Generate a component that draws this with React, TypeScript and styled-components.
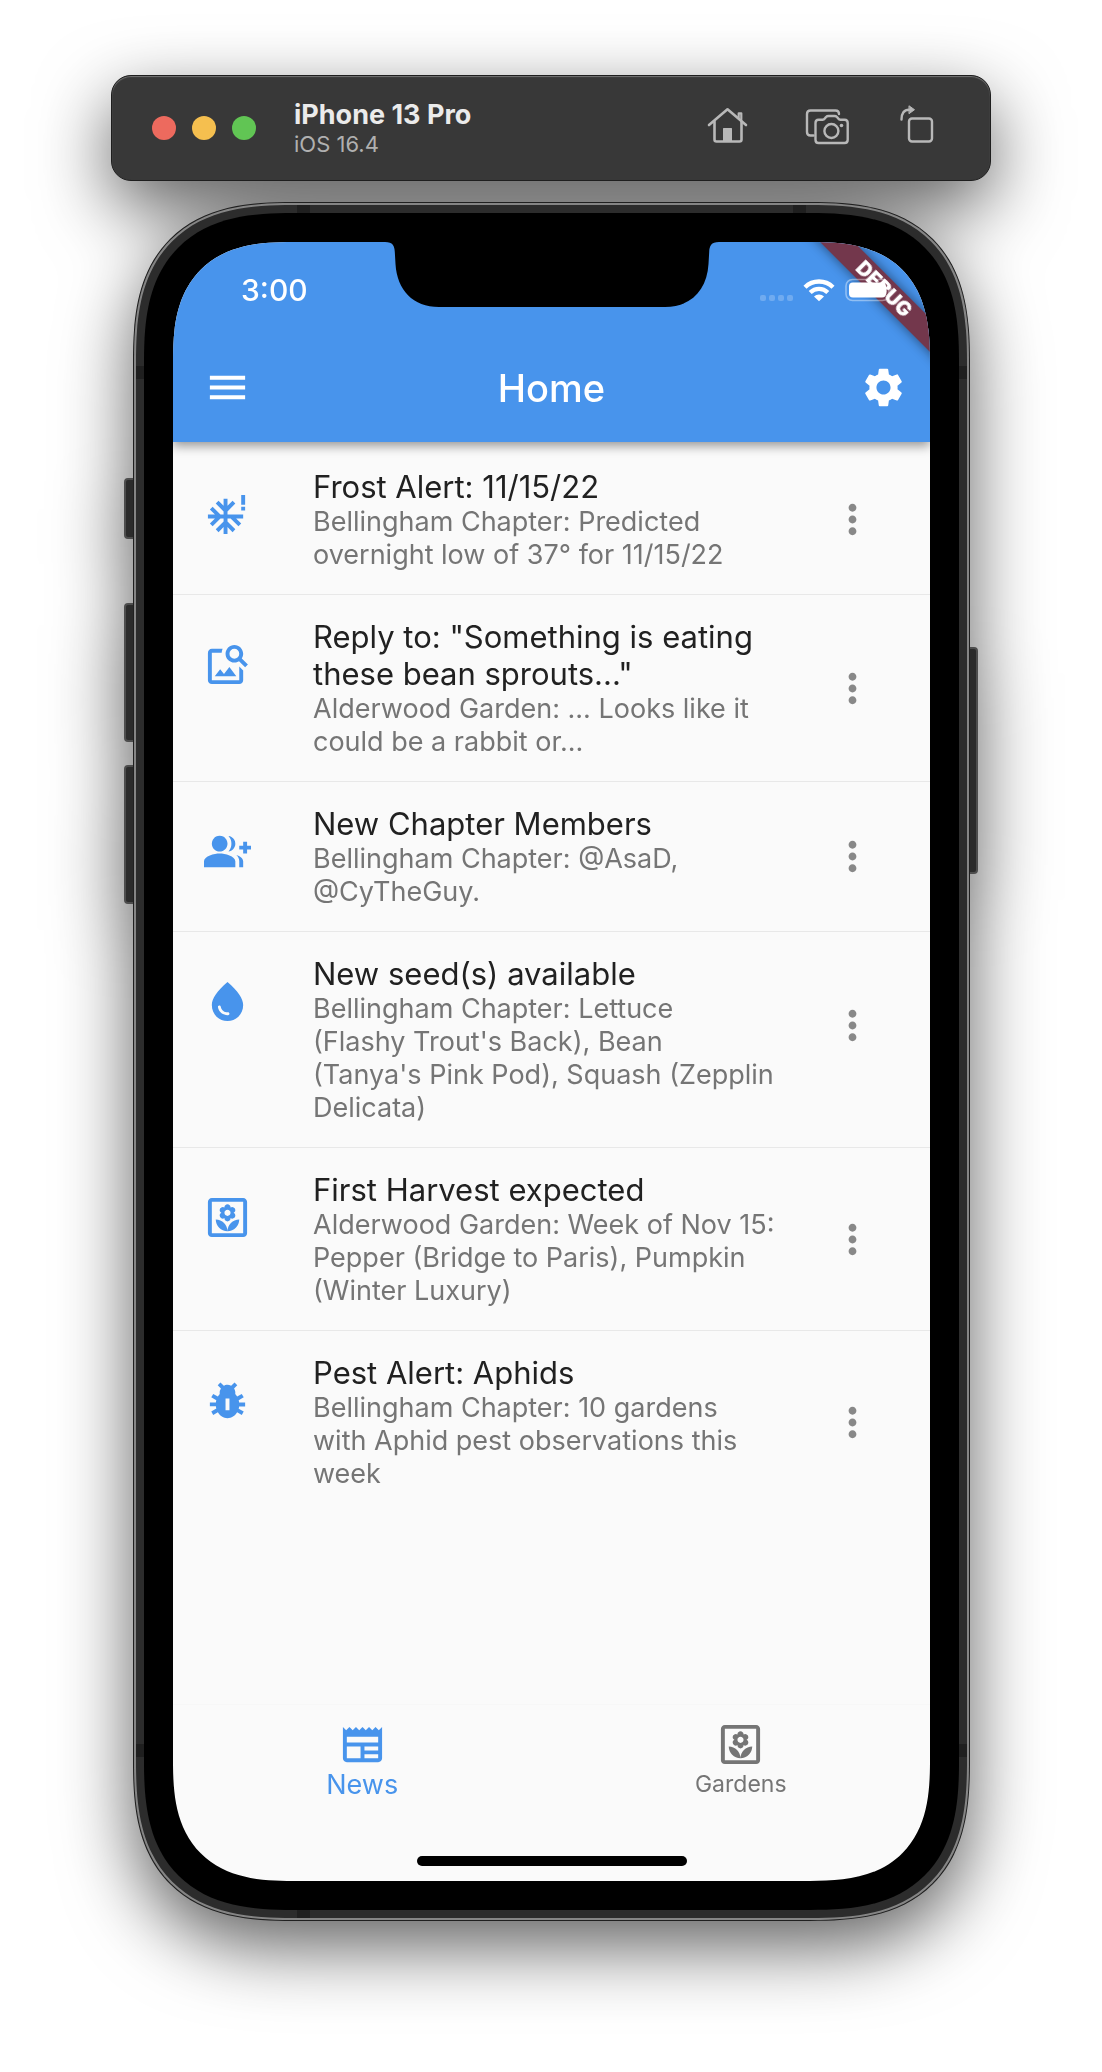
import React from "react";
import styled, { createGlobalStyle } from "styled-components";
import {
  MdGroupAdd,
  MdImageSearch,
  MdMenu,
  MdMoreVert,
  MdNewspaper,
  MdOutlineYard,
  MdPestControl,
  MdSettings,
  MdSevereCold,
  MdWaterDrop,
} from "react-icons/md";

const blue = "#4894ec";

const GlobalStyle = createGlobalStyle`
  *, *::before, *::after { box-sizing: border-box; }
  body {
    margin: 0;
    background: #fff;
    font-family: Inter, "Liberation Sans", sans-serif;
    -webkit-font-smoothing: antialiased;
  }
  h1, h2, p, ul { margin: 0; padding: 0; }
`;

const Page = styled.main`
  padding: 75px 24px 151px;
  overflow: hidden;
`;

const Simulator = styled.div`
  max-width: 880px;
  margin: 0 auto;
  display: flex;
  flex-direction: column;
  gap: 21px;
  filter: drop-shadow(0 26px 36px rgba(0, 0, 0, 0.62));
`;

/* Simulator window bar */

const WindowBar = styled.header`
  display: flex;
  align-items: center;
  height: 106px;
  padding: 0 54px 0 40px;
  border: 1px solid #1e1e1e;
  border-radius: 20px;
  background: #383838;
  box-shadow: inset 0 1px 1px #757575;
`;

const Lights = styled.div`
  display: flex;
  gap: 16px;
`;

const Light = styled.button<{ $color: string }>`
  width: 24px;
  height: 24px;
  padding: 0;
  border: 0;
  border-radius: 50%;
  background: ${(p) => p.$color};
`;

const DeviceInfo = styled.div`
  flex: 1;
  margin-left: 38px;
`;

const DeviceName = styled.p`
  color: #ebebeb;
  font-size: 27px;
  font-weight: 700;
  line-height: 32px;
`;

const DeviceOs = styled.p`
  color: #b0b0b0;
  font-size: 22px;
  line-height: 26px;
`;

const Tools = styled.div`
  display: flex;
  gap: 48px;
`;

const Tool = styled.button`
  display: block;
  padding: 0;
  border: 0;
  background: none;
  color: #b8b8b8;

  svg {
    display: block;
  }
`;

/* Phone hardware */

const Phone = styled.div`
  position: relative;
  margin: 0 21px 0 22px;
`;

const SideButton = styled.span<{ $side: "left" | "right"; $top: number; $length: number }>`
  position: absolute;
  top: ${(p) => p.$top}px;
  ${(p) => (p.$side === "left" ? "left: -9px;" : "right: -8px;")}
  width: 16px;
  height: ${(p) => p.$length}px;
  border: 2px solid #4d4d4d;
  border-radius: 4px;
  background: #2b2b2b;
`;

const Shell = styled.div`
  position: relative;
  padding: 2px;
  border: 1px solid #202020;
  border-radius: 128px;
  background: #858585;

  @supports (corner-shape: superellipse(1.4)) {
    border-radius: 160px;
    corner-shape: superellipse(1.4);
  }
`;

const Band = styled.div`
  padding: 8px;
  border-radius: 125px;
  background:
    linear-gradient(#1f1f1f, #1f1f1f) left 161px top / 13px 8px,
    linear-gradient(#1f1f1f, #1f1f1f) right 161px top / 13px 8px,
    linear-gradient(#1f1f1f, #1f1f1f) left 161px bottom / 13px 8px,
    linear-gradient(#1f1f1f, #1f1f1f) left top 161px / 8px 13px,
    linear-gradient(#1f1f1f, #1f1f1f) right top 161px / 8px 13px,
    linear-gradient(#1f1f1f, #1f1f1f) left bottom 161px / 8px 13px,
    linear-gradient(#1f1f1f, #1f1f1f) right bottom 161px / 8px 13px,
    #2c2c2c;
  background-repeat: no-repeat;

  @supports (corner-shape: superellipse(1.4)) {
    border-radius: 157px;
    corner-shape: superellipse(1.4);
  }
`;

const Bezel = styled.div`
  padding: 29px;
  border-radius: 117px;
  background: #000;

  @supports (corner-shape: superellipse(1.4)) {
    border-radius: 149px;
    corner-shape: superellipse(1.4);
  }
`;

const Screen = styled.div`
  position: relative;
  display: flex;
  flex-direction: column;
  min-height: 1639px;
  overflow: hidden;
  border-radius: 94px;
  background: #fafafa;

  @supports (corner-shape: superellipse(1.4)) {
    border-radius: 120px;
    corner-shape: superellipse(1.4);
  }
`;

const Notch = styled.svg`
  position: absolute;
  top: 0;
  left: 50%;
  width: 334px;
  height: 65px;
  transform: translateX(-50%);
`;

const Banner = styled.span`
  position: absolute;
  top: 35px;
  right: -54px;
  width: 200px;
  height: 24px;
  color: #fff;
  background: rgba(124, 34, 40, 0.82);
  box-shadow: 0 0 12px rgba(0, 0, 0, 0.5);
  font-size: 20px;
  font-weight: 900;
  line-height: 24px;
  text-align: center;
  transform: rotate(45deg);
`;

/* App */

const AppHeader = styled.header`
  position: relative;
  background: ${blue};
  color: #fff;
  box-shadow: 0 4px 10px rgba(0, 0, 0, 0.4);
`;

const StatusBar = styled.div`
  position: relative;
  display: flex;
  align-items: center;
  justify-content: space-between;
  height: 91px;
  padding: 5px 38px 0 68px;
`;

const Clock = styled.time`
  font-size: 30px;
  font-weight: 500;
  line-height: 36px;
`;

const StatusIcons = styled.div`
  display: flex;
  align-items: center;
  gap: 10px;

  svg {
    display: block;
  }
`;

const Toolbar = styled.div`
  display: grid;
  grid-template-columns: 1fr auto 1fr;
  align-items: center;
  height: 109px;
  padding: 0 23px;
`;

const ToolbarButton = styled.button<{ $end?: boolean }>`
  justify-self: ${(p) => (p.$end ? "end" : "start")};
  padding: ${(p) => (p.$end ? "0" : "0 8px")};
  border: 0;
  background: none;
  color: inherit;
  font-size: 47px;
  line-height: 0;
`;

const Title = styled.h1`
  font-size: 38px;
  font-weight: 500;
  line-height: 44px;
`;

const List = styled.ul`
  flex: 1;
  padding-top: 3px;
  list-style: none;
`;

const Item = styled.li`
  display: grid;
  grid-template-columns: 109px minmax(0, 1fr) 93px;
  padding: 23px 31px;
  border-bottom: 1px solid #e8e8e8;

  &:last-child {
    border-bottom: 0;
  }
`;

const ItemIcon = styled.span`
  padding-top: 23px;
  color: ${blue};
  font-size: 47px;
  line-height: 0;
`;

const ItemText = styled.div`
  padding-right: 16px;
  white-space: pre-line;
`;

const ItemTitle = styled.h2`
  color: #212121;
  font-size: 31px;
  font-weight: 400;
  line-height: 37px;
`;

const ItemBody = styled.p`
  color: #757575;
  font-size: 27px;
  line-height: 33px;
`;

/* Centred on the text, but never lower than the middle of a four-line item */
const MoreButton = styled.button`
  justify-self: center;
  align-self: start;
  height: 100%;
  max-height: 140px;
  padding: 0;
  border: 0;
  background: none;
  color: #888;
  font-size: 47px;
  line-height: 0;
`;

const BottomBar = styled.footer`
  display: flex;
  flex-direction: column;
  align-items: center;
  justify-content: space-between;
  height: 177px;
  padding: 16px 0 15px;
  border-top: 1px solid #f7f7f7;
`;

const Tabs = styled.nav`
  display: grid;
  grid-template-columns: 1fr 1fr;
  width: 100%;
`;

const Tab = styled.a<{ $active?: boolean }>`
  display: flex;
  flex-direction: column;
  align-items: center;
  color: ${(p) => (p.$active ? blue : "#757575")};
  font-size: ${(p) => (p.$active ? 27 : 23)}px;
  line-height: 33px;
  text-decoration: none;

  svg {
    font-size: 47px;
  }
`;

const HomeIndicator = styled.span`
  width: 270px;
  height: 10px;
  border-radius: 5px;
  background: #000;
`;

const HomeGlyph = () => (
  <svg width="48" height="48" viewBox="0 0 48 48" fill="none" stroke="currentColor" strokeWidth="2.6" strokeLinecap="round" strokeLinejoin="round">
    <path d="M5 21 23.5 5.3 42 21" />
    <path d="M10.5 17.5V35.5Q10.5 37.5 12.5 37.5H35.5Q37.5 37.5 37.5 35.5V17.5" />
    <path d="M34.7 13.5V9.3H37.3V15.5" strokeWidth="2.2" />
    <path d="M19 24.5Q19 24 19.5 24H27.5Q28 24 28 24.5V37.5H19Z" fill="currentColor" stroke="none" />
  </svg>
);

const CameraGlyph = () => (
  <svg width="52" height="48" viewBox="0 0 52 48" fill="none" stroke="currentColor" strokeWidth="2.4" strokeLinecap="round" strokeLinejoin="round">
    <path d="M13.5 31.5H10.5Q7 31.5 7 28V10Q7 6.5 10.5 6.5H35.5Q39 6.5 39 10" />
    <path d="M18.5 15.7H22.5Q24 15.7 25 14.3L26 13Q27 12 28.5 12H34.5Q36 12 37 13L38 14.3Q39 15.7 40.5 15.7H44.5Q47.7 15.7 47.7 19V35.7Q47.7 39 44.5 39H18.5Q15.5 39 15.5 35.7V19Q15.5 15.7 18.5 15.7Z" />
    <circle cx="31.4" cy="27" r="7" />
    <circle cx="41.5" cy="21.5" r="1.8" fill="currentColor" stroke="none" />
  </svg>
);

const RotateGlyph = () => (
  <svg width="36" height="48" viewBox="0 0 36 48" fill="none" stroke="currentColor" strokeWidth="2.4" strokeLinecap="round" strokeLinejoin="round">
    <rect x="9" y="14.5" width="23" height="23" rx="3" />
    <path d="M1.5 15.5C1.5 9 4 5.7 9 5.7" />
    <path d="M9.3 2 14.5 5.7 9.3 9.5Z" fill="currentColor" strokeWidth="1" />
  </svg>
);

const SignalGlyph = () => (
  <svg width="33" height="24" viewBox="0 0 33 24" fill="#fff" fillOpacity="0.22">
    {[0, 9, 18, 27].map((x) => (
      <rect key={x} x={x} y="17" width="6" height="6" rx="2" />
    ))}
  </svg>
);

const WifiGlyph = () => (
  <svg width="32" height="24" viewBox="0 0 32 24" fill="none" stroke="#fff">
    <path d="M2 9.2A20 20 0 0 1 30 9.2" strokeWidth="4.4" />
    <path d="M7.2 14.5A12.5 12.5 0 0 1 24.8 14.5" strokeWidth="4.2" />
    <path d="M16 23.3 11 18.5A7 7 0 0 1 21 18.5Z" fill="#fff" stroke="none" />
  </svg>
);

const BatteryGlyph = () => (
  <svg width="47" height="24" viewBox="0 0 47 24">
    <rect x="1" y="1.5" width="43" height="21" rx="6.5" fill="none" stroke="#fff" strokeOpacity="0.4" strokeWidth="1.6" />
    <rect x="4" y="4.5" width="37" height="15" rx="4" fill="#fff" />
    <path d="M45.2 9Q47 10 47 12T45.2 15Z" fill="#fff" fillOpacity="0.4" />
  </svg>
);

const news = [
  {
    icon: MdSevereCold,
    title: "Frost Alert: 11/15/22",
    body: "Bellingham Chapter: Predicted\novernight low of 37° for 11/15/22",
  },
  {
    icon: MdImageSearch,
    title: 'Reply to: "Something is eating\nthese bean sprouts..."',
    body: "Alderwood Garden: ... Looks like it\ncould be a rabbit or...",
  },
  {
    icon: MdGroupAdd,
    title: "New Chapter Members",
    body: "Bellingham Chapter: @AsaD,\n@CyTheGuy.",
  },
  {
    icon: MdWaterDrop,
    title: "New seed(s) available",
    body: "Bellingham Chapter: Lettuce\n(Flashy Trout's Back), Bean\n(Tanya's Pink Pod), Squash (Zepplin\nDelicata)",
  },
  {
    icon: MdOutlineYard,
    title: "First Harvest expected",
    body: "Alderwood Garden: Week of Nov 15:\nPepper (Bridge to Paris), Pumpkin\n(Winter Luxury)",
  },
  {
    icon: MdPestControl,
    title: "Pest Alert: Aphids",
    body: "Bellingham Chapter: 10 gardens\nwith Aphid pest observations this\nweek",
  },
];

export default function App() {
  return (
    <>
      <GlobalStyle />
      <Page>
        <Simulator>
          <WindowBar>
            <Lights>
              <Light $color="#ed6a5e" aria-label="Close" />
              <Light $color="#f5bf4f" aria-label="Minimize" />
              <Light $color="#61c554" aria-label="Zoom" />
            </Lights>
            <DeviceInfo>
              <DeviceName>iPhone 13 Pro</DeviceName>
              <DeviceOs>iOS 16.4</DeviceOs>
            </DeviceInfo>
            <Tools>
              <Tool aria-label="Home screen"><HomeGlyph /></Tool>
              <Tool aria-label="Screenshot"><CameraGlyph /></Tool>
              <Tool aria-label="Rotate"><RotateGlyph /></Tool>
            </Tools>
          </WindowBar>

          <Phone>
            <SideButton $side="left" $top={276} $length={61} />
            <SideButton $side="left" $top={401} $length={139} />
            <SideButton $side="left" $top={563} $length={139} />
            <SideButton $side="right" $top={445} $length={227} />
            <Shell>
              <Band>
                <Bezel>
                  <Screen>
                    <AppHeader>
                      <Banner>DEBUG</Banner>
                      <StatusBar>
                        <Clock>3:00</Clock>
                        <StatusIcons>
                          <SignalGlyph />
                          <WifiGlyph />
                          <BatteryGlyph />
                        </StatusIcons>
                      </StatusBar>
                      <Notch viewBox="0 0 334 65" aria-hidden="true">
                        <path d="M0 0C8 0 9.5 4 9.8 10L10.5 22C12 48 28 65 54 65H280C306 65 322 48 323.5 22L324.2 10C324.5 4 326 0 334 0Z" />
                      </Notch>
                      <Toolbar>
                        <ToolbarButton aria-label="Menu"><MdMenu /></ToolbarButton>
                        <Title>Home</Title>
                        <ToolbarButton $end aria-label="Settings"><MdSettings /></ToolbarButton>
                      </Toolbar>
                    </AppHeader>

                    <List>
                      {news.map(({ icon: Icon, title, body }) => (
                        <Item key={title}>
                          <ItemIcon><Icon /></ItemIcon>
                          <ItemText>
                            <ItemTitle>{title}</ItemTitle>
                            <ItemBody>{body}</ItemBody>
                          </ItemText>
                          <MoreButton aria-label={`More about ${title}`}><MdMoreVert /></MoreButton>
                        </Item>
                      ))}
                    </List>

                    <BottomBar>
                      <Tabs>
                        <Tab href="#news" $active><MdNewspaper />News</Tab>
                        <Tab href="#gardens"><MdOutlineYard />Gardens</Tab>
                      </Tabs>
                      <HomeIndicator />
                    </BottomBar>
                  </Screen>
                </Bezel>
              </Band>
            </Shell>
          </Phone>
        </Simulator>
      </Page>
    </>
  );
}
